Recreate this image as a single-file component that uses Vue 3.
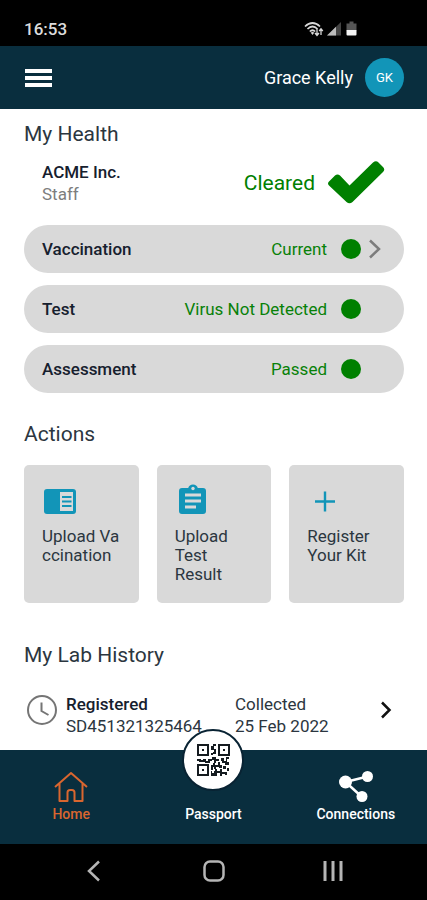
<script setup>
const checks = [
  { name: 'Vaccination', status: 'Current', more: true },
  { name: 'Test', status: 'Virus Not Detected', more: false },
  { name: 'Assessment', status: 'Passed', more: false }
]
const actions = [
  { icon: 'card', label: 'Upload Vaccination', breakAll: true },
  { icon: 'clipboard', label: 'Upload Test Result' },
  { icon: 'plus', label: 'Register Your Kit' }
]
</script>

<template>
  <div class="app">
    <div class="status-bar">
      <span class="clock">16:53</span>
      <svg class="status-icons" width="56" height="18" viewBox="0 0 56 18" aria-hidden="true">
        <g fill="none" stroke="#d8d8d8" stroke-width="1.7">
          <path d="M1 6.5Q8.500 -.5 16 6.500" />
          <path d="M3.500 9Q8.500 4 13.500 9" />
          <path d="M5.800 11.500Q8.500 9 11.200 11.500" />
        </g>
        <path d="M8.500 15L6.600 12.600Q8.500 11.200 10.400 12.600Z" fill="#d8d8d8" />
        <path d="M13 9v6M11 13l2 2.500 2-2.500M17 15V9M15.200 11L17 8.800l1.800 2.200" fill="none" stroke="#d8d8d8" stroke-width="1.300" />
        <path d="M23 15.500L37 2v13.500Z" fill="#444" />
        <path d="M23 15.500L32 6.800v8.700Z" fill="#bcbcbc" />
        <path d="M45.500 1.500h4v2h3v7H42.500v-7h3Z" fill="#555" />
        <path d="M42.500 10h10v4.500q0 1-1 1h-8q-1 0-1-1Z" fill="#f4f4f4" />
      </svg>
    </div>

    <header class="header">
      <button class="menu" aria-label="Menu"><i></i><i></i><i></i></button>
      <div class="user">
        <span>Grace Kelly</span>
        <span class="avatar">GK</span>
      </div>
    </header>

    <main class="content">
      <h2>My Health</h2>
      <div class="clearance">
        <div class="org">
          <strong>ACME Inc.</strong>
          <span>Staff</span>
        </div>
        <div class="cleared">
          <span>Cleared</span>
          <svg width="58" height="44" viewBox="0 0 58 44" aria-hidden="true">
            <path d="M2 20.500L8 14.500Q10.500 12.500 13 14.500L22.500 24.500 46 1.500Q49 -1 51.500 1.500L56 6Q58.500 8.500 56 11L25.500 41Q22.500 43.500 19.500 41L2 24.500Q0 22.500 2 20.500Z" fill="#008000" />
          </svg>
        </div>
      </div>

      <div class="checks">
        <button v-for="c in checks" :key="c.name" class="check">
          <strong>{{ c.name }}</strong>
          <span class="result">{{ c.status }}</span>
          <span class="dot"></span>
          <span class="more">
            <svg v-if="c.more" width="14" height="20" viewBox="0 0 14 20" aria-hidden="true">
              <path d="M2 1.500L11 10 2 18.500" fill="none" stroke="#7c7c7c" stroke-width="2.500" />
            </svg>
          </span>
        </button>
      </div>

      <h2>Actions</h2>
      <div class="actions">
        <button v-for="a in actions" :key="a.label" class="action">
          <svg v-if="a.icon === 'card'" width="36" height="36" viewBox="0 0 36 36" aria-hidden="true">
            <rect x="2" y="6" width="32" height="25" rx="3" fill="#1295b8" />
            <path d="M18 9h13v19H18Z" fill="#d9d9d9" />
            <path d="M20 14h9.500M20 18.500h9.500M20 23h9.500" stroke="#1295b8" stroke-width="2" />
          </svg>
          <svg v-else-if="a.icon === 'clipboard'" width="36" height="36" viewBox="0 0 36 36" aria-hidden="true">
            <path d="M7 5H13.200a5 5 0 0 1 9.600 0H28Q31 5 31 8V28Q31 31 28 31H7Q4 31 4 28V8Q4 5 7 5Z" fill="#1295b8" />
            <circle cx="18" cy="5.500" r="1.700" fill="#d9d9d9" />
            <path d="M10 12h16M10 18h16M10 24h11" stroke="#d9d9d9" stroke-width="2.800" />
          </svg>
          <svg v-else width="36" height="36" viewBox="0 0 36 36" aria-hidden="true">
            <path d="M18 8.500v20M8 18.500h20" stroke="#1295b8" stroke-width="2.400" />
          </svg>
          <span :class="{ 'break-all': a.breakAll }">{{ a.label }}</span>
        </button>
      </div>

      <h2>My Lab History</h2>
      <a class="lab" href="#">
        <svg class="lab-clock" width="32" height="34" viewBox="0 0 32 34" aria-hidden="true">
          <circle cx="16" cy="17" r="14" fill="none" stroke="#757575" stroke-width="2" />
          <path d="M15.500 9.500V18L22.500 22" fill="none" stroke="#757575" stroke-width="2" />
        </svg>
        <span class="lab-col wide"><strong>Registered</strong><span>SD451321325464</span></span>
        <span class="lab-col"><span>Collected</span><span>25 Feb 2022</span></span>
        <svg class="lab-more" width="12" height="34" viewBox="0 0 12 34" aria-hidden="true">
          <path d="M2 9.500L9.500 17 2 24.500" fill="none" stroke="#111" stroke-width="2.500" />
        </svg>
      </a>
    </main>

    <nav class="tabs">
      <a class="tab active" href="#">
        <svg width="36" height="32" viewBox="0 0 36 32" aria-hidden="true">
          <path d="M2 16L18 2 34 16M6.500 12.500V30H14.500V21.500Q14.500 19 17 19H19Q21.500 19 21.500 21.500V30H29.500V12.500" fill="none" stroke="#d9662f" stroke-width="2" stroke-linejoin="round" />
        </svg>
        <span>Home</span>
      </a>
      <a class="tab" href="#">
        <span class="badge">
          <svg width="34" height="34" viewBox="0 0 34 34" aria-hidden="true">
            <g fill="none" stroke="#151b20" stroke-width="2">
              <rect x="2" y="2" width="10" height="10" />
              <rect x="23" y="2" width="10" height="10" />
              <rect x="2" y="22" width="10" height="10" />
            </g>
            <path d="M6 6h2v2H6ZM27 6h2v2h-2ZM6 26h2v2H6ZM17 1h3v2h-2v3h2v5h-3V9h1V7h-3V3h2ZM15 10h2v2h-2ZM1 16h4v1h2v-1h3v2h2v-2h4v2h-2v2H9v-1H3v-1H1ZM16 14h4v2h3v2h-3v2h-2v-3h-2ZM25 15h3v3h-3ZM30 14h3v2h-2v3h2v3h-4v-2h-3v-2h4ZM15 22h2v-2h2v2h3v-3h2v3h2v3h-3v-1h-3v2h-2v-2h-1v3h-2ZM27 23h3v3h-3ZM31 25h2v3h-2ZM19 26h2v2h3v-2h2v3h3v2h-3v2h-2v-3h-3v3h-6v-3h3v-2h1ZM29 29h2v3h-2ZM15 28h1v2h-1Z" fill="#151b20" />
          </svg>
        </span>
        <span>Passport</span>
      </a>
      <a class="tab" href="#">
        <svg width="36" height="32" viewBox="0 0 36 32" aria-hidden="true">
          <path d="M7.500 11L29.500 5.500M7.500 11L24 26" stroke="#fff" stroke-width="2.500" />
          <g fill="#fff">
            <circle cx="7.500" cy="11" r="6.500" />
            <circle cx="29.500" cy="5.500" r="5.500" />
            <circle cx="24" cy="25.500" r="5.500" />
          </g>
        </svg>
        <span>Connections</span>
      </a>
    </nav>

    <div class="system-bar">
      <button aria-label="Back">
        <svg width="24" height="24" viewBox="0 0 24 24"><path d="M17 2.500L7 12 17 21.500" fill="none" stroke="#b5b5b5" stroke-width="2.500" /></svg>
      </button>
      <button aria-label="Home screen">
        <svg width="24" height="24" viewBox="0 0 24 24"><rect x="2.500" y="2.500" width="19" height="19" rx="5.500" fill="none" stroke="#b5b5b5" stroke-width="2.500" /></svg>
      </button>
      <button aria-label="Recent apps">
        <svg width="24" height="24" viewBox="0 0 24 24"><path d="M4 2v20M12 2v20M20 2v20" stroke="#b5b5b5" stroke-width="3" /></svg>
      </button>
    </div>
  </div>
</template>

<style>
body {
  margin: 0;
}
</style>

<style scoped>
* {
  box-sizing: border-box;
}
.app {
  display: flex;
  flex-direction: column;
  height: 100vh;
  background: #fff;
  color: #2b3640;
  font: 17px/22px Roboto, "Liberation Sans", sans-serif;
}
button {
  border: 0;
  padding: 0;
  background: none;
  color: inherit;
  font: inherit;
  text-align: left;
}
a {
  color: inherit;
  text-decoration: none;
}
svg {
  display: block;
  flex: none;
}
strong {
  font-weight: 500;
  color: #16202e;
}
.status-bar {
  display: flex;
  flex: none;
  align-items: center;
  justify-content: space-between;
  height: 46px;
  padding: 12px 67px 0 24px;
  background: #000;
  color: #dcdcdc;
}
.clock {
  font-weight: 500;
}
.header {
  display: flex;
  flex: none;
  align-items: center;
  justify-content: space-between;
  height: 63px;
  padding: 0 23px 0 25px;
  background: #092e3e;
  color: #fff;
}
.menu {
  display: flex;
  flex-direction: column;
  gap: 3px;
  width: 27px;
}
.menu i {
  height: 4px;
  background: #fff;
}
.user {
  display: flex;
  align-items: center;
  gap: 12px;
  font-size: 18px;
}
.avatar {
  width: 39px;
  border-radius: 50%;
  background: #1295b8;
  font-size: 13px;
  line-height: 39px;
  text-align: center;
}
.content {
  flex: 1;
  min-height: 0;
  overflow: hidden;
  padding: 12px 23px 0 24px;
}
h2 {
  margin: 0;
  font-size: 21px;
  line-height: 26px;
  font-weight: 400;
}
.clearance {
  display: flex;
  justify-content: space-between;
  align-items: center;
  margin: 14px 0 20px;
  padding: 0 19px 0 18px;
}
.org {
  display: flex;
  flex-direction: column;
}
.org span {
  color: #7d7d7d;
}
.cleared {
  display: flex;
  align-items: center;
  gap: 12px;
  color: #008000;
  font-size: 21px;
}
.checks {
  display: flex;
  flex-direction: column;
  gap: 12px;
  margin-bottom: 28px;
}
.check {
  display: flex;
  align-items: center;
  height: 48px;
  padding: 0 22px 0 18px;
  border-radius: 24px;
  background: #d9d9d9;
}
.result {
  margin-left: auto;
  color: #088108;
}
.dot {
  width: 20px;
  height: 20px;
  margin: 0 7px 0 14px;
  border-radius: 50%;
  background: #008000;
}
.more {
  width: 14px;
}
.actions {
  display: grid;
  grid-template-columns: repeat(3, 1fr);
  gap: 18px;
  margin: 18px 0 39px;
}
.action {
  display: flex;
  flex-direction: column;
  gap: 8px;
  min-height: 138px;
  padding: 18px;
  border-radius: 5px;
  background: #d9d9d9;
  line-height: 19px;
}
.break-all {
  word-break: break-all;
}
.lab {
  display: flex;
  align-items: flex-start;
  margin-top: 25px;
  padding: 0 12px 0 2px;
}
.lab-clock {
  margin-right: 8px;
}
.lab-col {
  display: flex;
  flex-direction: column;
}
.wide {
  width: 169px;
}
.lab-more {
  margin-left: auto;
}
.tabs {
  display: grid;
  flex: none;
  grid-template-columns: repeat(3, 1fr);
  height: 94px;
  background: #092e3e;
  color: #fff;
  font-size: 14px;
  font-weight: 500;
}
.tab {
  position: relative;
  display: flex;
  flex-direction: column;
  align-items: center;
  justify-content: flex-end;
  padding-bottom: 19px;
}
.active {
  color: #d9662f;
}
.badge {
  position: absolute;
  top: -21px;
  display: grid;
  place-items: center;
  width: 62px;
  height: 62px;
  border: 2px solid #092333;
  border-radius: 50%;
  background: #fff;
}
.system-bar {
  display: flex;
  flex: none;
  align-items: center;
  justify-content: space-between;
  height: 56px;
  padding: 0 82px 2px;
  background: #000;
}
</style>
